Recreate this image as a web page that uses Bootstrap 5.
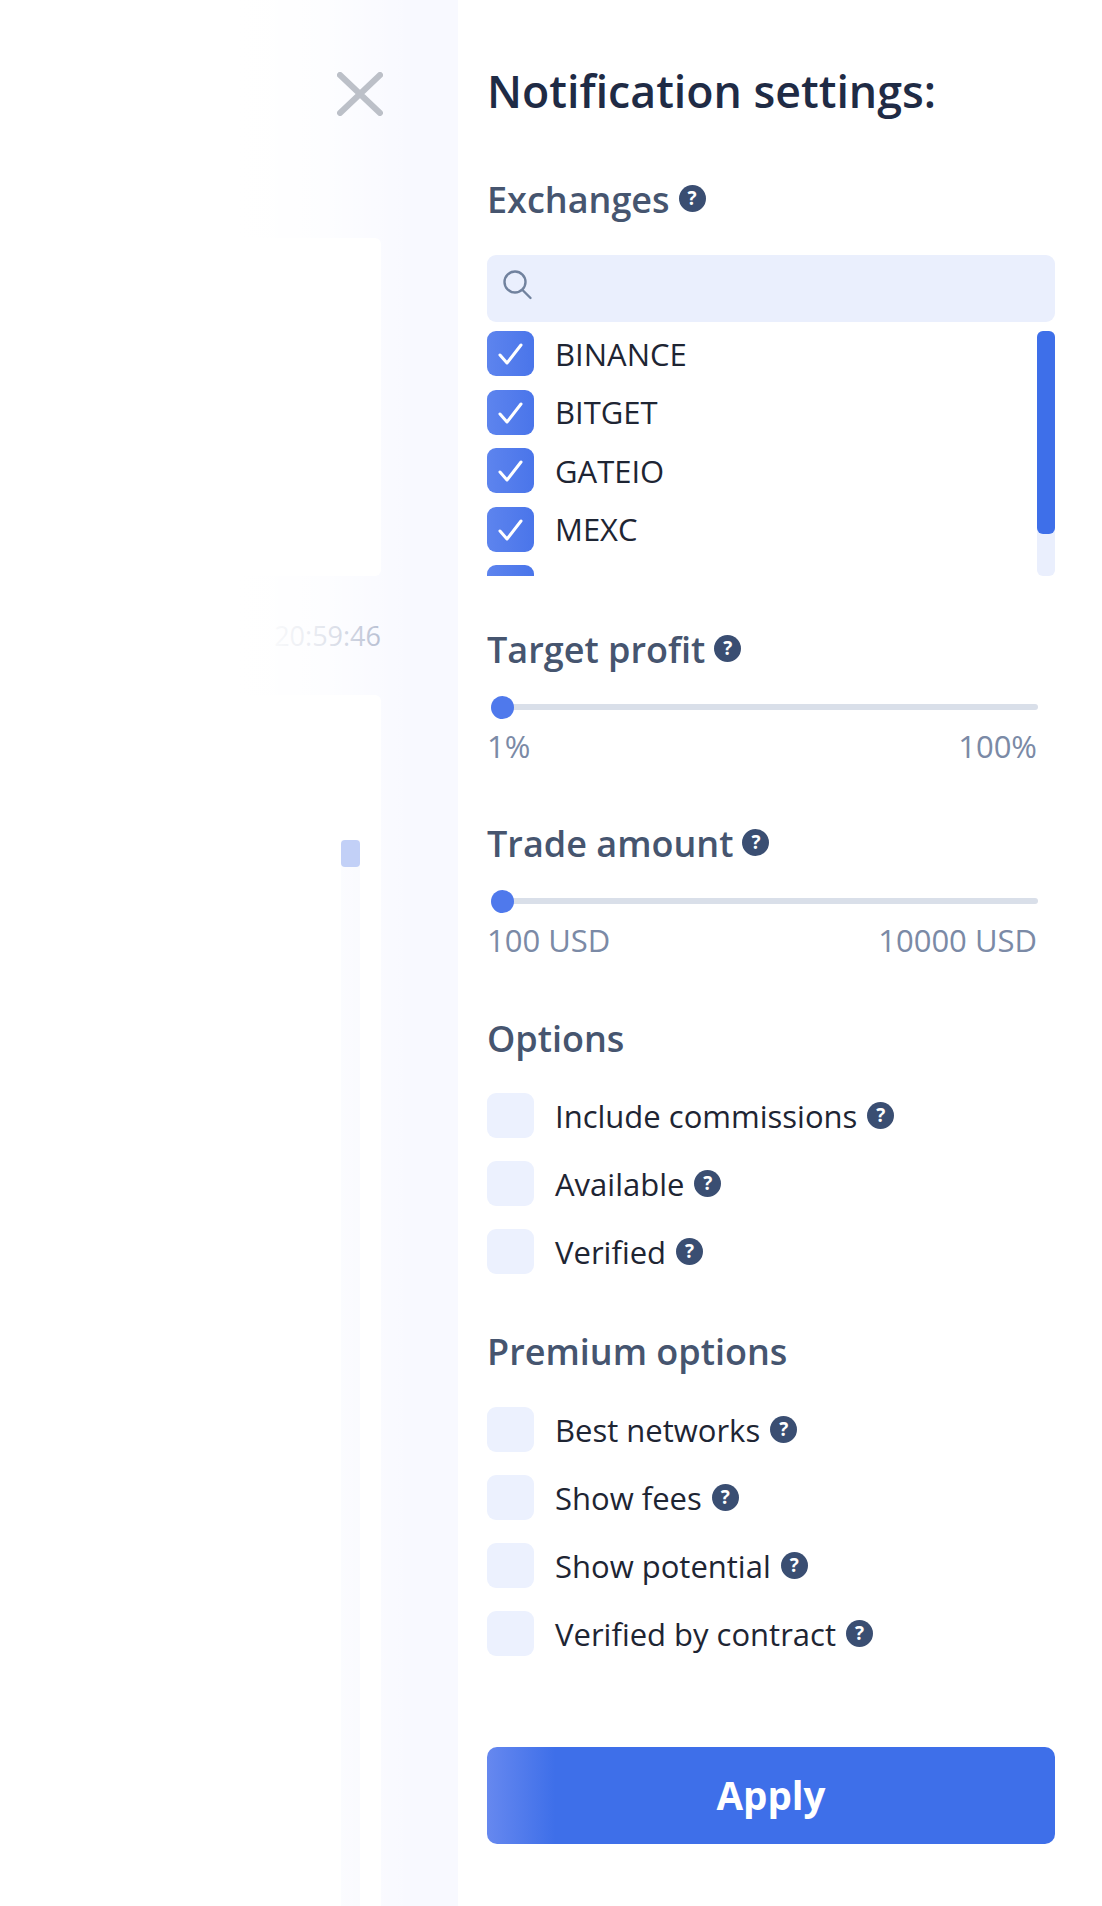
<!DOCTYPE html>
<html lang="en">
<head>
<meta charset="utf-8">
<title>Notification settings</title>
<link href="https://cdn.jsdelivr.net/npm/bootstrap@5.3.0/dist/css/bootstrap.min.css" rel="stylesheet">
<style>
html,body{height:100%;}
body{font-family:"Open Sans","Noto Sans",sans-serif;background:#fff;overflow:hidden;}
.page-wrap{height:1906px;}
.backdrop-side{width:458px;flex:0 0 458px;background:#f8f9ff;position:relative;padding-right:77px;overflow:hidden;}
.backdrop-side::after{content:"";position:absolute;inset:0;background:linear-gradient(90deg,#fff 0,#fff 52%,rgba(255,255,255,.93) 60%,rgba(255,255,255,.75) 70%,rgba(255,255,255,.4) 80%,rgba(255,255,255,0) 90%);pointer-events:none;}
.close-x{display:block;width:46px;height:44px;margin:72px 0 0 337px;position:relative;z-index:2;}
.ghost-card{background:#fff;border-radius:6px;height:338px;margin-top:122px;}
.ghost-time{font-size:27px;line-height:36px;text-align:right;color:#9ea8c2;margin-top:42px;}
.ghost-card2{background:#fff;border-radius:6px;height:1300px;margin-top:41px;position:relative;}
.ghost-track{position:absolute;left:341px;top:145px;bottom:0;width:19px;background:#f6f7fe;}
.ghost-thumb{position:absolute;left:0;top:0;width:19px;height:27px;background:#c2d0f7;border-radius:4px;z-index:3;}
.side-panel{flex:1 1 auto;background:#fff;padding:0 47px 0 29px;min-width:0;}
.panel-title{font-size:44.7px;font-weight:600;line-height:52px;color:#1f2b45;margin:65px 0 0;}
.sec-title{font-size:36px;font-weight:600;line-height:48px;color:#46556f;margin:0;}
.help-dot{display:inline-flex;align-items:center;justify-content:center;width:27px;height:27px;border-radius:50%;background:#3a4e72;color:#fff;font-size:19px;font-weight:700;line-height:1;flex:none;}
.sec-head{gap:9px;}
.sec-head .help-dot{margin-bottom:3px;}
.search-box{height:67px;background:#eaeffd;border-radius:9px;}
.search-box svg{margin:0 0 8px 14px;}
.exch-list{height:245px;overflow:hidden;position:relative;margin-top:9px;}
.tick-row{display:flex;align-items:center;margin:0;padding:0;min-height:0;}
.tick-row .form-check-input{width:47px;height:45px;margin:0 21px 0 0;flex:none;float:none;border:0;border-radius:9px;background-color:#ecf1fe;box-shadow:none;}
.tick-row .form-check-input:checked{background-color:#4f79ec;background-image:url("data:image/svg+xml,%3Csvg xmlns='http://www.w3.org/2000/svg' viewBox='0 0 47 45'%3E%3Cpath d='M13 24l7 8 14-18' fill='none' stroke='%23fff' stroke-width='3' stroke-linecap='round' stroke-linejoin='round'/%3E%3C/svg%3E"),linear-gradient(90deg,#5d84ee,#4a75ea);background-size:100% 100%;}
.tick-row .form-check-label{font-size:31px;line-height:40px;color:#1e2533;margin-right:10px;}
.exch-list .tick-row{margin-bottom:13.5px;}
.list-thumb{position:absolute;right:0;top:0;width:18px;height:203px;background:#3e6fe9;border-radius:6px;}
.list-track{position:absolute;right:0;top:0;bottom:0;width:18px;background:#eaeffd;border-radius:6px;}
.opt-stack .tick-row{margin-bottom:23px;}
.opt-stack .tick-row:last-child{margin-bottom:0;}
.range-wrap{width:550px;}
.form-range.range-slim{display:block;height:24px;width:547px;margin-left:4px;padding:0;}
.range-slim::-webkit-slider-runnable-track{height:6px;background:#d9dfe9;border-radius:3px;}
.range-slim::-webkit-slider-thumb{width:23px;height:23px;margin-top:-8.5px;border-radius:50%;background:#4f79ec;border:0;box-shadow:none;}
.range-ends{font-size:31px;line-height:40px;color:#7b8aa6;margin-top:7px;}
.apply-btn{width:568px;height:97px;border:0;border-radius:10px;background:linear-gradient(90deg,#6688ef 0,#3e6fe9 12%);color:#fff;font-size:38.5px;font-weight:700;line-height:1;}
.apply-btn:hover{background:linear-gradient(90deg,#6688ef 0,#3e6fe9 12%);color:#fff;}
.mt-sec1{margin-top:59px;}
.mt-box{margin-top:31px;}
.mt-sec2{margin-top:50px;}
.mt-sec2b{margin-top:54px;}
.mt-sec3{margin-top:55px;}
.mt-sl{margin-top:21px;}
.mt-opt{margin-top:30px;}
.mt-opt2{margin-top:31px;}
.mt-prem{margin-top:54px;}
.mt-apply{margin-top:91px;}
</style>
</head>
<body>
<div class="d-flex page-wrap">
  <div class="backdrop-side">
    <svg class="close-x" viewBox="0 0 46 44" aria-label="Close"><path d="M3 3l40 38M43 3L3 41" stroke="#bcc0c8" stroke-width="6" stroke-linecap="round" fill="none"/></svg>
    <div class="ghost-card"></div>
    <div class="ghost-time">20:59:46</div>
    <div class="ghost-card2"><div class="ghost-track"><div class="ghost-thumb"></div></div></div>
  </div>
  <div class="side-panel">
    <h1 class="panel-title">Notification settings:</h1>
    <div class="d-flex align-items-center sec-head mt-sec1">
      <h2 class="sec-title">Exchanges</h2><span class="help-dot">?</span>
    </div>
    <div class="search-box d-flex align-items-center mt-box">
      <svg width="32" height="32" viewBox="0 0 32 32" fill="none" stroke="#71829e" stroke-width="2.4" stroke-linecap="round"><circle cx="14" cy="13" r="10.5"/><path d="M21.5 21l8 8"/></svg>
    </div>
    <div class="exch-list">
      <div class="list-track"><div class="list-thumb"></div></div>
      <div class="form-check tick-row"><input class="form-check-input" type="checkbox" id="e1" checked><label class="form-check-label" for="e1">BINANCE</label></div>
      <div class="form-check tick-row"><input class="form-check-input" type="checkbox" id="e2" checked><label class="form-check-label" for="e2">BITGET</label></div>
      <div class="form-check tick-row"><input class="form-check-input" type="checkbox" id="e3" checked><label class="form-check-label" for="e3">GATEIO</label></div>
      <div class="form-check tick-row"><input class="form-check-input" type="checkbox" id="e4" checked><label class="form-check-label" for="e4">MEXC</label></div>
      <div class="form-check tick-row"><input class="form-check-input" type="checkbox" id="e5" checked></div>
    </div>

    <div class="d-flex align-items-center sec-head mt-sec2">
      <h2 class="sec-title">Target profit</h2><span class="help-dot">?</span>
    </div>
    <div class="range-wrap mt-sl">
      <input type="range" class="form-range range-slim" min="1" max="100" value="1" aria-label="Target profit">
      <div class="range-ends d-flex justify-content-between"><span>1%</span><span>100%</span></div>
    </div>

    <div class="d-flex align-items-center sec-head mt-sec2b">
      <h2 class="sec-title">Trade amount</h2><span class="help-dot">?</span>
    </div>
    <div class="range-wrap mt-sl">
      <input type="range" class="form-range range-slim" min="100" max="10000" value="100" aria-label="Trade amount">
      <div class="range-ends d-flex justify-content-between"><span>100 USD</span><span>10000 USD</span></div>
    </div>

    <h2 class="sec-title mt-sec3">Options</h2>
    <div class="opt-stack mt-opt">
      <div class="form-check tick-row"><input class="form-check-input" type="checkbox" id="o1"><label class="form-check-label" for="o1">Include commissions</label><span class="help-dot">?</span></div>
      <div class="form-check tick-row"><input class="form-check-input" type="checkbox" id="o2"><label class="form-check-label" for="o2">Available</label><span class="help-dot">?</span></div>
      <div class="form-check tick-row"><input class="form-check-input" type="checkbox" id="o3"><label class="form-check-label" for="o3">Verified</label><span class="help-dot">?</span></div>
    </div>

    <h2 class="sec-title mt-prem">Premium options</h2>
    <div class="opt-stack mt-opt2">
      <div class="form-check tick-row"><input class="form-check-input" type="checkbox" id="p1"><label class="form-check-label" for="p1">Best networks</label><span class="help-dot">?</span></div>
      <div class="form-check tick-row"><input class="form-check-input" type="checkbox" id="p2"><label class="form-check-label" for="p2">Show fees</label><span class="help-dot">?</span></div>
      <div class="form-check tick-row"><input class="form-check-input" type="checkbox" id="p3"><label class="form-check-label" for="p3">Show potential</label><span class="help-dot">?</span></div>
      <div class="form-check tick-row"><input class="form-check-input" type="checkbox" id="p4"><label class="form-check-label" for="p4">Verified by contract</label><span class="help-dot">?</span></div>
    </div>

    <button type="button" class="btn apply-btn d-block mt-apply">Apply</button>
  </div>
</div>
<script src="https://cdn.jsdelivr.net/npm/bootstrap@5.3.0/dist/js/bootstrap.bundle.min.js"></script>
</body>
</html>
